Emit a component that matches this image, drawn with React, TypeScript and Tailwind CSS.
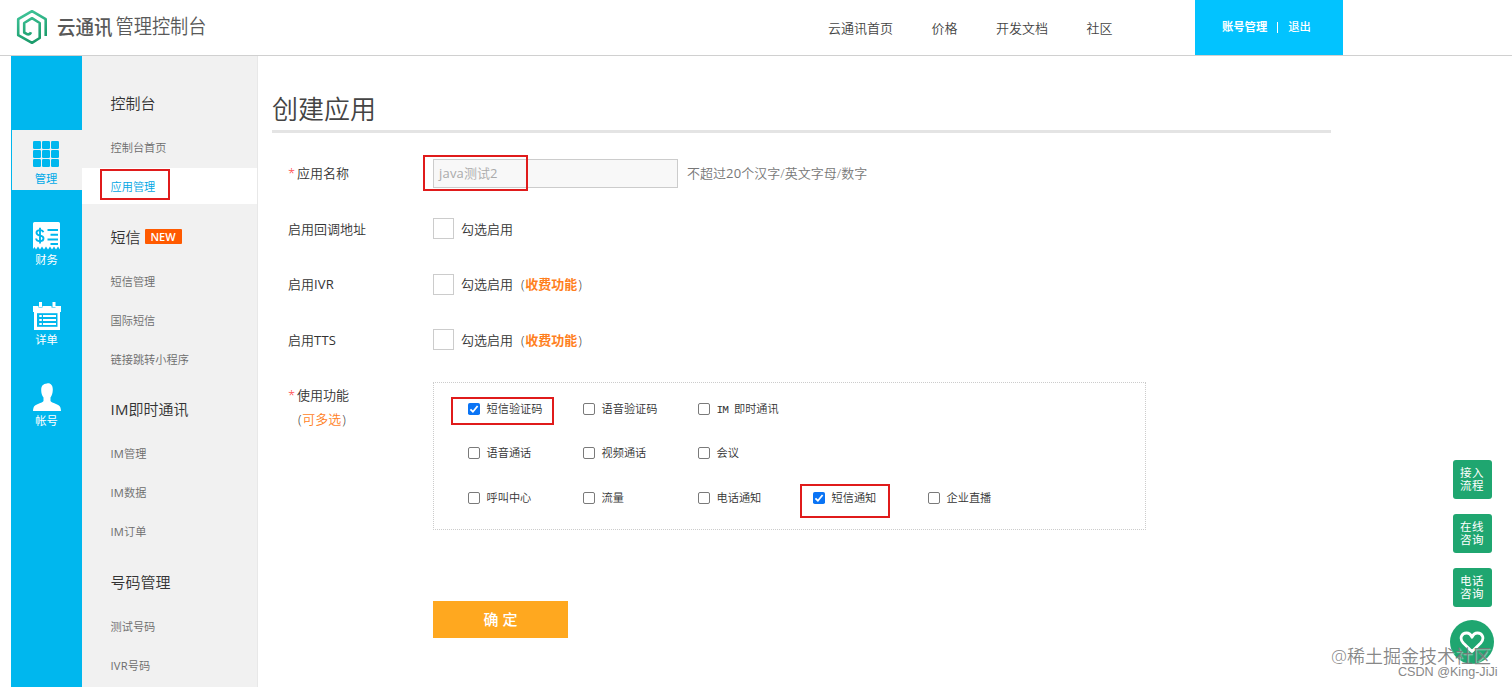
import type { ReactNode } from "react";

type Item = { label: string; active?: boolean };
type Group = { title: string; badge?: string; items: Item[] };

const groups: Group[] = [
  { title: "控制台", items: [{ label: "控制台首页" }, { label: "应用管理", active: true }] },
  { title: "短信", badge: "NEW", items: [{ label: "短信管理" }, { label: "国际短信" }, { label: "链接跳转小程序" }] },
  { title: "IM即时通讯", items: [{ label: "IM管理" }, { label: "IM数据" }, { label: "IM订单" }] },
  { title: "号码管理", items: [{ label: "测试号码" }, { label: "IVR号码" }] },
];

const features: { label: ReactNode; checked?: boolean; mark?: "wide" | "narrow" }[][] = [
  [
    { label: "短信验证码", checked: true, mark: "wide" },
    { label: "语音验证码" },
    { label: <span><span className="tracking-[-0.900px]">IM </span>即时通讯</span> },
  ],
  [{ label: "语音通话" }, { label: "视频通话" }, { label: "会议" }],
  [
    { label: "呼叫中心" },
    { label: "流量" },
    { label: "电话通知" },
    { label: "短信通知", checked: true, mark: "narrow" },
    { label: "企业直播" },
  ],
];

/** Mixed-script text: Latin runs get the regular weight beside the lighter Chinese. */
function Mixed({ text }: { text: string }) {
  return (
    <span>
      {text.split(/([A-Za-z0-9]+)/).map((part, i) =>
        i % 2 ? (
          <span key={i} className="font-normal tracking-[0.200px]">
            {part}
          </span>
        ) : (
          part
        ),
      )}
    </span>
  );
}

function Mark({ className }: { className: string }) {
  return <span className={`pointer-events-none absolute border-2 border-[#e01b1b] ${className}`} />;
}

function Logo() {
  return (
    <svg className="h-[36px] w-[32px]" viewBox="0 0 32 36" fill="none" stroke="url(#logo)" strokeWidth="2.600" strokeLinejoin="round">
      <defs>
        <linearGradient id="logo" x1="0" y1="0" x2="0.3" y2="1">
          <stop offset="0" stopColor="#42c79c" />
          <stop offset="1" stopColor="#1c9c6c" />
        </linearGradient>
      </defs>
      <path d="M29.700 27V10.200L16 2.200 2.200 10.200V26.200L16 33.800 23.700 29V14L16 9.200 8.200 14V23.500L11.500 25.300Q14 25.600 15 23.200" />
    </svg>
  );
}

function GridIcon() {
  return (
    <svg className="h-[26px] w-[26px]" viewBox="0 0 26 26" fill="#00b7ee">
      {[0, 9, 18].map((y) => [0, 9, 18].map((x) => <rect key={`${x}-${y}`} x={x} y={y} width="8" height="8" rx="1.3" />))}
    </svg>
  );
}

function BillIcon() {
  return (
    <svg className="h-[28px] w-[27px]" viewBox="0 0 27 28">
      <path
        fill="#fff"
        d="M1.5 0h24Q27 0 27 1.5V27.5L25 24.5 23 27.5 21 24.5 19 27.5 17 24.5 15 27.5 13 24.5 11 27.5 9 24.5 7 27.5 5 24.5 3 27.5 1.5 25 0 27V1.5Q0 0 1.5 0Z"
      />
      <path
        fill="none"
        stroke="#00b7ee"
        strokeWidth="1.9"
        d="M10.3 10.3C10 8.7 8.700 8.100 6.900 8.100 4.800 8.100 3.500 9.100 3.500 10.800 3.500 14.800 10.500 12.600 10.500 16.300 10.500 18.200 9 19.200 6.900 19.200 4.800 19.200 3.300 18.200 3.100 16.500M7 5.800V21.500M14.500 8h10.500M17.500 12.700h7.500M14.500 17.500h10.500M17.500 22h7.500"
      />
    </svg>
  );
}

function ListIcon() {
  return (
    <svg className="h-[28px] w-[28px]" viewBox="0 0 28 28">
      <path fill="#fff" d="M0 4h5.500v1.500h4V4h9v1.500h4V4H28v6H0ZM1 10h26v18H1ZM6 0h3v5H6ZM19.500 0h3v5h-3Z" />
      <path fill="#00b7ee" d="M4 11.200h20.500v13.600H4Z" />
      <path stroke="#fff" strokeWidth="2" d="M6.300 14h2.500M10 14h13M6.300 18h2.500M10 18h13M6.300 22h2.500M10 22h13" />
    </svg>
  );
}

function UserIcon() {
  return (
    <svg className="h-[28px] w-[28px]" viewBox="0 0 28 28" fill="#fff">
      <path d="M14 0.500c3.500-.8 6 2 5.800 6.500-.1 3-1 6-2.300 7.500v3.500c1 2 9 3.200 9.900 6.500.3 1 .6 2.500.6 3.500H0c0-1 .2-2.500.6-3.500 1-3.300 9-4.500 9.900-6.500v-3.500C9 13 8.200 10 8.200 7 8.200 3 10 .8 14 .5Z" />
    </svg>
  );
}

function RailItem({ icon, label, active }: { icon: ReactNode; label: string; active?: boolean }) {
  return (
    <div
      className={`flex h-[60px] flex-col items-center pt-[11px] text-[11.300px] leading-[22px] font-normal ${
        active ? "ml-px bg-[#f1f1f1] pr-[2px] text-[#00a9e8]" : "text-white"
      }`}
    >
      <div className="flex h-[27px] shrink-0 items-start">{icon}</div>
      <span>{label}</span>
    </div>
  );
}

function Row({ label, required, children }: { label: string; required?: boolean; children: ReactNode }) {
  return (
    <div className="flex h-[55.700px] items-center">
      <div className="w-[145px] shrink-0 leading-5">
        {required && <span className="inline-block w-[9px] text-[#f33]">*</span>}
        <Mixed text={label} />
      </div>
      {children}
    </div>
  );
}

function EnableBox({ paid }: { paid?: boolean }) {
  return (
    <label className="flex items-center leading-5">
      <span className="h-[21px] w-[21px] border border-[#ccc] bg-white" />
      <span className="ml-[7px]">勾选启用</span>
      {paid && (
        <span className="ml-[8px]">
          (<b className="mx-[0.800px] font-bold text-[#ff7f1e]">收费功能</b>)
        </span>
      )}
    </label>
  );
}

function Check({ checked }: { checked?: boolean }) {
  return checked ? (
    <svg className="h-3 w-3 shrink-0" viewBox="0 0 12 12">
      <rect width="12" height="12" rx="1.800" fill="#0a74f5" />
      <path d="M2.400 6.300 4.900 8.700 9.600 3" fill="none" stroke="#fff" strokeWidth="1.800" />
    </svg>
  ) : (
    <span className="h-3 w-3 shrink-0 rounded-[2px] border border-[#7a7a7a] bg-white" />
  );
}

export default function App() {
  return (
    <div className="relative flex h-[687px] w-[1512px] flex-col overflow-hidden bg-white font-['Open_Sans','Noto_Sans_CJK_SC',sans-serif] text-[13px] font-[350] whitespace-nowrap text-[#333]">
      <header className="flex h-[56px] shrink-0 border-b border-[#d0d0d0] pl-4">
        <div className="flex w-[812px] items-center pb-px">
          <Logo />
          <div className="ml-[9px] flex origin-center scale-y-110 items-center text-[#595959]">
            <span className="text-[18.500px] font-medium">云通讯</span>
            <span className="ml-[3px] text-[18.200px]">管理控制台</span>
          </div>
        </div>
        <nav className="flex w-[367px] items-center gap-[38.500px] pt-[2px] text-[#444]">
          <a>云通讯首页</a>
          <a>价格</a>
          <a>开发文档</a>
          <a>社区</a>
        </nav>
        <div className="flex w-[148px] items-center bg-[#02c3ff] pb-px pl-[27px] text-[11.300px] text-white">
          <b className="font-bold">账号管理</b>
          <span className="mx-[10px] h-[11px] w-px bg-white" />
          <span className="font-medium">退出</span>
        </div>
      </header>

      <div className="flex min-h-0 flex-1 pl-[11px]">
        <aside className="flex w-[71px] shrink-0 flex-col gap-[20.500px] bg-[#00b7ee] pt-[74px]">
          <RailItem icon={<GridIcon />} label="管理" active />
          <RailItem icon={<BillIcon />} label="财务" />
          <RailItem icon={<ListIcon />} label="详单" />
          <RailItem icon={<UserIcon />} label="帐号" />
        </aside>

        <aside className="h-[631px] w-[176px] shrink-0 overflow-hidden border-r border-[#e8e8e8] bg-[#f1f1f1] pt-[16px]">
          {groups.map((g) => (
            <section key={g.title}>
              <h2 className="flex h-[55.500px] items-center pt-[7px] pl-[28.500px] text-[15px] leading-5">
                <Mixed text={g.title} />
                {g.badge && (
                  <span className="ml-[4px] flex h-[15px] w-[37px] items-center justify-center rounded-[1px] bg-[#ff5a00] text-[11px] font-semibold text-white">
                    {g.badge}
                  </span>
                )}
              </h2>
              {g.items.map((it) => (
                <div key={it.label} className="flex h-[39px] items-center text-[11.200px] leading-[17px] text-[#6c6c6c]">
                  <div className={`relative flex h-[36px] w-full items-center pt-px pl-[28.500px] ${it.active ? "bg-white text-[#00a5e3]" : ""}`}>
                    <Mixed text={it.label} />
                    {it.active && <Mark className="top-px left-[18px] h-[31px] w-[70px]" />}
                  </div>
                </div>
              ))}
            </section>
          ))}
        </aside>

        <main className="w-[1073px] pt-[29px] pl-[14px]">
          <h1 className="h-[48px] border-b-[3px] border-[#e4e4e4] pt-[2px] text-[26px] leading-[45px] text-[#444]">创建应用</h1>
          <form className="pt-[12px] pl-4">
            <Row label="应用名称" required>
              <div className="relative top-px flex h-[29px] w-[245px] items-center border border-[#ccc] bg-[#f8f8f8] pl-[5px] text-[#aaa]">
                <Mixed text="java测试2" />
                <Mark className="-top-[5px] -left-[11px] h-[36px] w-[105px]" />
              </div>
              <span className="ml-[9px] pt-[2px] text-[#777]">
                <Mixed text="不超过20个汉字/英文字母/数字" />
              </span>
            </Row>
            <Row label="启用回调地址">
              <EnableBox />
            </Row>
            <Row label="启用IVR">
              <EnableBox paid />
            </Row>
            <Row label="启用TTS">
              <EnableBox paid />
            </Row>
            <div className="flex pt-[14px]">
              <div className="w-[145px] shrink-0 pt-px leading-6">
                <div>
                  <span className="inline-block w-[9px] text-[#f33]">*</span>使用功能
                </div>
                <div className="pl-[10px]">
                  (<span className="mx-[0.800px] text-[#ff7f1e]">可多选</span>)
                </div>
              </div>
              <div className="h-[148px] w-[713px] border border-dotted border-[#ccc] pt-[4px] pl-[34px] font-['Liberation_Mono','Noto_Sans_CJK_SC',monospace] text-[11.200px]">
                {features.map((row, i) => (
                  <div key={i} className="flex h-[44.500px] items-center">
                    {row.map((f, j) => (
                      <label key={j} className="relative flex w-[115px] items-center gap-[6.500px]">
                        <Check checked={f.checked} />
                        <span className="pt-[2px]">{f.label}</span>
                        {f.mark === "wide" && <Mark className="-top-[3px] -left-[17px] h-[28px] w-[103px]" />}
                        {f.mark === "narrow" && <Mark className="-top-[5px] -left-[13px] h-[34px] w-[90px]" />}
                      </label>
                    ))}
                  </div>
                ))}
              </div>
            </div>
            <button type="button" className="mt-[71px] ml-[145px] h-[37px] w-[135px] bg-[#ffa81f] text-[15px] font-medium text-white">
              确 定
            </button>
          </form>
        </main>
      </div>

      <div className="absolute top-[460px] right-[20px] flex w-[39px] flex-col items-center gap-[15px]">
        {[
          ["接入", "流程"],
          ["在线", "咨询"],
          ["电话", "咨询"],
        ].map(([a, b]) => (
          <div
            key={a}
            className="flex h-[39px] w-[39px] flex-col items-center justify-center rounded-[3px] bg-[#1fa670] pr-px pb-[2px] text-[11.500px] leading-[13px] font-normal tracking-[0.500px] text-white"
          >
            <span>{a}</span>
            <span>{b}</span>
          </div>
        ))}
        <div className="-mt-[2px] mr-px flex h-[44px] w-[44px] shrink-0 items-center justify-center rounded-full bg-[#1fa670]">
          <svg className="h-[22px] w-[26px]" viewBox="0 0 26 22" fill="none" stroke="#fff" strokeWidth="2.800" strokeLinejoin="round">
            <path d="M13 20.500 4.300 12C-.2 7 3 2 7.500 2c2.500 0 4.400 1.600 5.500 4.200C14.100 3.600 16 2 18.500 2 23 2 26.200 7 21.700 12Z" />
          </svg>
        </div>
      </div>

      <div className="absolute top-[647px] left-[1331px] text-[18px] leading-[18px] text-[#777]/90 [text-shadow:1px_1px_1px_rgba(255,255,255,0.5)]">
        @稀土掘金技术社区
      </div>
      <div className="absolute top-[665px] left-[1398px] font-['Liberation_Sans',sans-serif] text-[12.600px] leading-[14px] text-[#888] [text-shadow:1px_1px_1px_rgba(255,255,255,0.5)]">
        CSDN @King-JiJi
      </div>
    </div>
  );
}
